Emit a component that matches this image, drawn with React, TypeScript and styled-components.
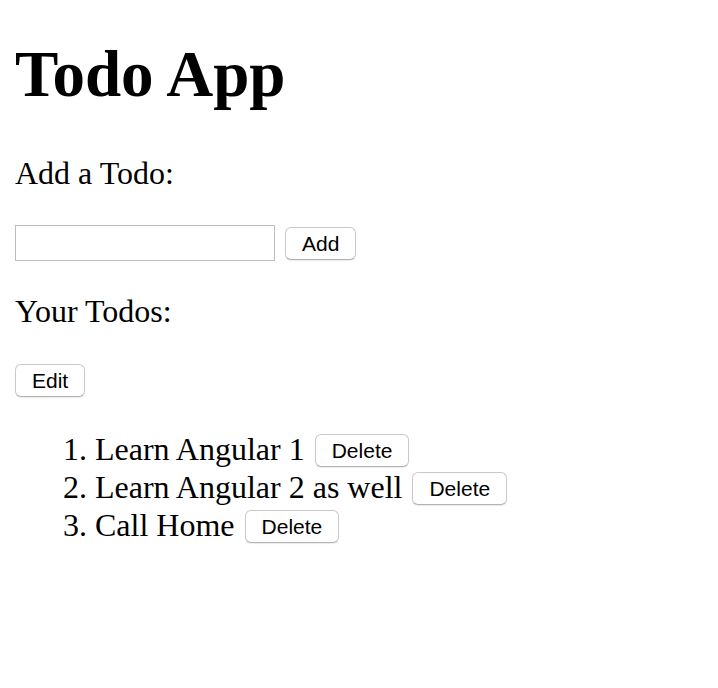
import React, { useState } from "react";
import styled, { createGlobalStyle } from "styled-components";

const GlobalStyle = createGlobalStyle`
  html, body {
    margin: 0;
    padding: 0;
    background: #ffffff;
  }
  body {
    font-family: "Liberation Serif", "Times New Roman", serif;
    font-size: 32px;
    color: #000000;
  }
`;

const Page = styled.div`
  padding: 0 15px 20px;
  display: flex;
  flex-direction: column;
  align-items: flex-start;
`;

const Title = styled.h1`
  margin: 42px 0 0;
  font-size: 65px;
  line-height: 64px;
  font-weight: bold;
`;

const Label = styled.p<{ $gap: number }>`
  margin: ${(p) => p.$gap}px 0 0;
  font-size: 32px;
  line-height: 36px;
`;

const InputRow = styled.div`
  margin-top: 34px;
  display: flex;
  align-items: center;
  gap: 10px;
`;

const TextInput = styled.input`
  box-sizing: border-box;
  width: 260px;
  height: 36px;
  margin: 0;
  border: 1px solid #bdbdbd;
  padding: 0 6px;
  font-family: "Liberation Sans", Arial, sans-serif;
  font-size: 21px;
  outline: none;
`;

const Button = styled.button`
  box-sizing: border-box;
  height: 33px;
  margin: 0;
  padding: 0 16px;
  background: #ffffff;
  border: 1px solid #c9c9c9;
  border-bottom-color: #b3b3b3;
  border-radius: 6px;
  box-shadow: 0 1px 1px rgba(0, 0, 0, 0.08);
  font-family: "Liberation Sans", Arial, sans-serif;
  font-size: 21px;
  line-height: 31px;
  color: #000000;
  cursor: pointer;
`;

const EditButton = styled(Button)`
  margin-top: 35px;
`;

const TodoList = styled.ol`
  margin: 33px 0 0;
  padding: 0 0 8px 80px;
  list-style: decimal outside;
`;

const TodoItem = styled.li`
  font-size: 32px;
  line-height: 38px;
`;

const DeleteButton = styled(Button)`
  margin: -4px 0 -4px 2px;
  vertical-align: 2px;
`;

export default function App() {
  const [todos] = useState<string[]>([
    "Learn Angular 1",
    "Learn Angular 2 as well",
    "Call Home",
  ]);

  return (
    <>
      <GlobalStyle />
      <Page>
        <Title>Todo App</Title>
        <Label $gap={49}>Add a Todo:</Label>
        <InputRow>
          <TextInput type="text" />
          <Button>Add</Button>
        </InputRow>
        <Label $gap={32}>Your Todos:</Label>
        <EditButton>Edit</EditButton>
        <TodoList>
          {todos.map((t) => (
            <TodoItem key={t}>
              {t} <DeleteButton>Delete</DeleteButton>
            </TodoItem>
          ))}
        </TodoList>
      </Page>
    </>
  );
}
